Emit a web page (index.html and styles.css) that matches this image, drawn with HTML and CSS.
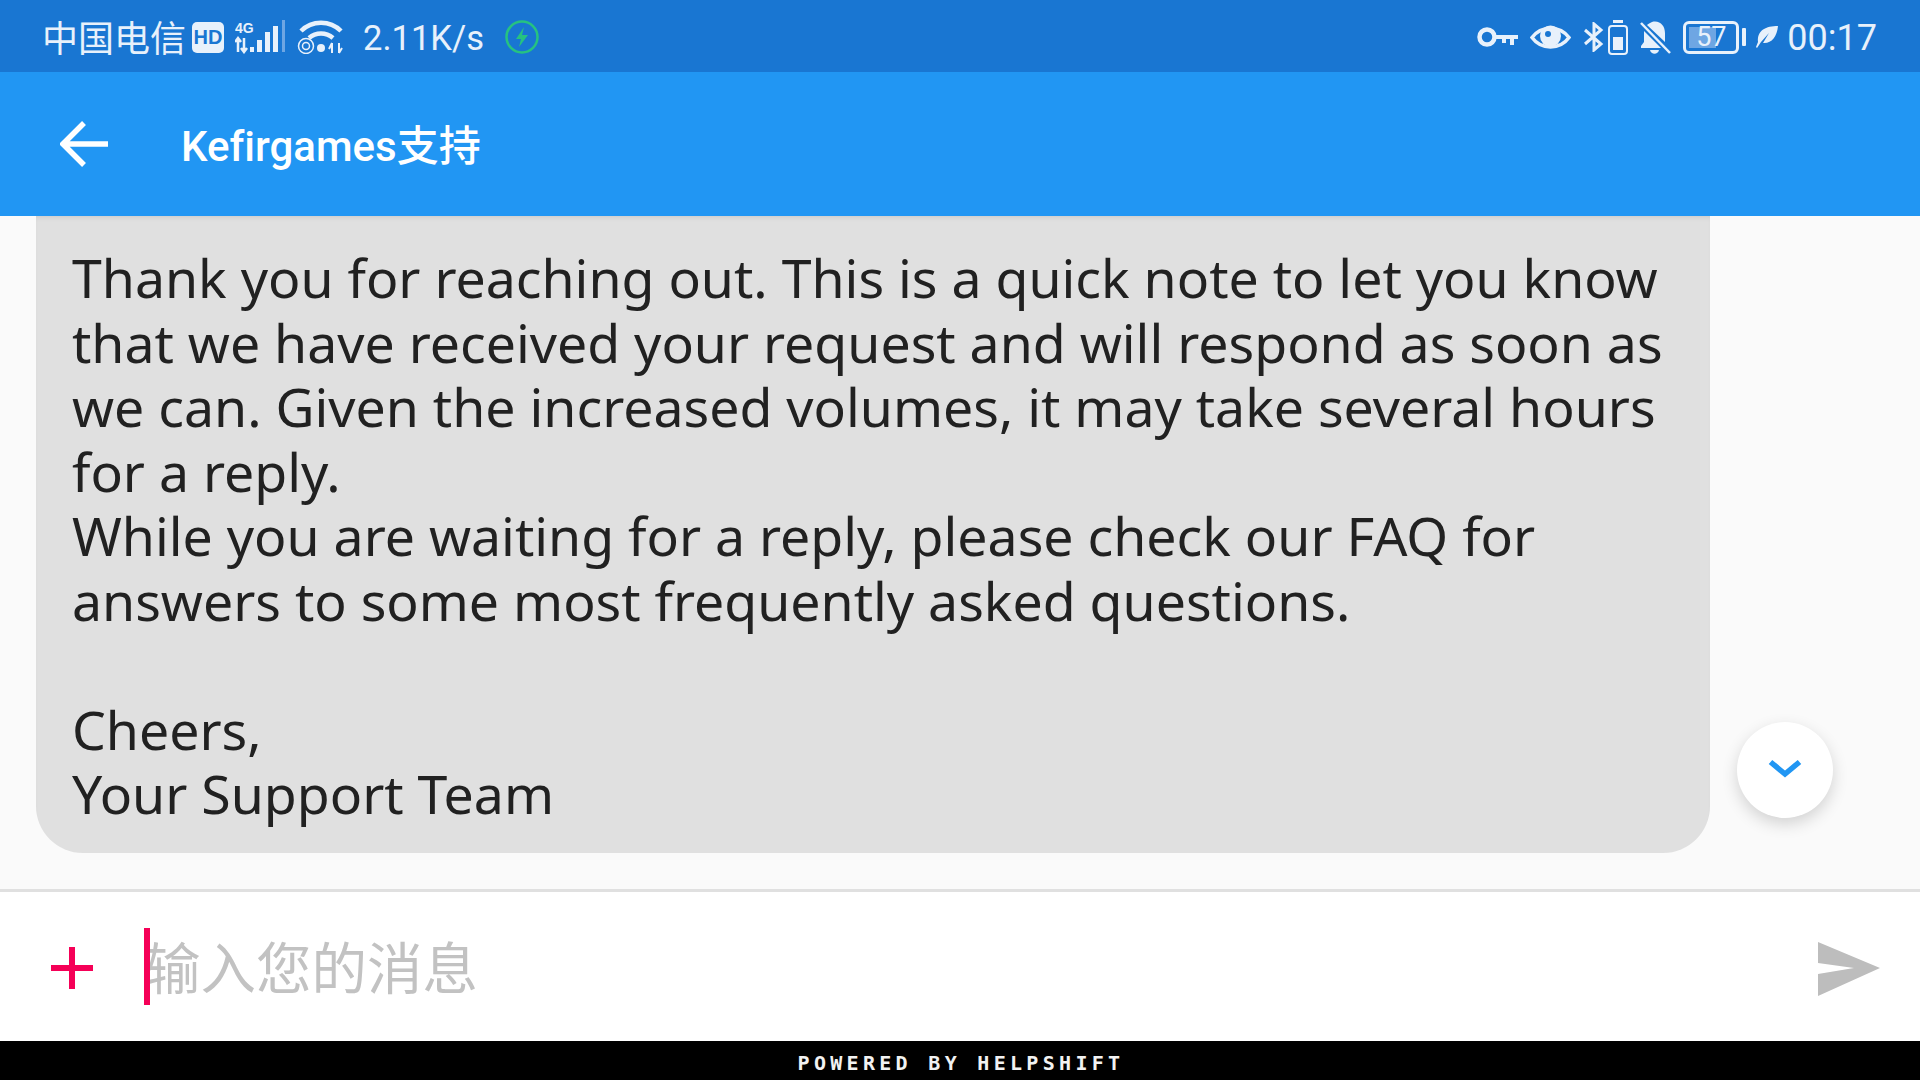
FILE: index.html
```html
<!DOCTYPE html>
<html lang="en">
<head>
    <meta charset="UTF-8">
    <title>Kefirgames支持</title>
    <link rel="stylesheet" href="styles.css">
</head>
<body>

    <div class="status-bar">
        <div class="status-left">
            <span class="carrier">中国电信</span>
            <svg class="ic-hd" width="32" height="31" viewBox="0 0 32 31">
                <rect width="32" height="31" rx="5" fill="#e8f1fb"/>
                <text x="16" y="22" text-anchor="middle" class="hd-text">HD</text>
            </svg>
            <svg class="ic-signal" width="54" height="34" viewBox="0 0 54 34">
                <text x="0" y="13" class="tiny-text">4G</text>
                <path d="M3 18v14M0 22l3-4 3 4M9 18v14M6 28l3 4 3-4" stroke="#e8f1fb" stroke-width="2.500" fill="none"/>
                <rect x="15" y="27" width="4" height="5" fill="#e8f1fb"/>
                <rect x="22" y="20" width="5" height="12" fill="#e8f1fb"/>
                <rect x="30" y="12" width="5" height="20" fill="#e8f1fb"/>
                <rect x="38" y="6" width="5" height="26" fill="#e8f1fb"/>
                <rect x="47" y="0" width="3" height="32" fill="#6ea6e3"/>
            </svg>
            <svg class="ic-wifi" width="48" height="34" viewBox="0 0 48 34">
                <path d="M4 11C15 0 33 0 44 11" stroke="#e8f1fb" stroke-width="4.500" fill="none"/>
                <path d="M12 18c7-6 17-6 24 0" stroke="#e8f1fb" stroke-width="4.500" fill="none"/>
                <circle cx="24" cy="28" r="4" fill="#e8f1fb"/>
                <circle cx="9" cy="26" r="7.5" stroke="#e8f1fb" stroke-width="1.500" fill="none"/>
                <circle cx="9" cy="26" r="3.5" stroke="#e8f1fb" stroke-width="1.500" fill="none"/>
                <path d="M35 23v10M32 29l3-6M42 23v10M42 33l3-5" stroke="#e8f1fb" stroke-width="2" fill="none"/>
            </svg>
            <span class="speed">2.11K/s</span>
            <svg class="ic-bolt" width="34" height="34" viewBox="0 0 34 34">
                <circle cx="17" cy="17" r="15.5" stroke="#26c281" stroke-width="2.500" fill="none"/>
                <path d="M19 7l-8 12h5l-2 8 9-12h-6z" fill="#26c281"/>
            </svg>
        </div>
        <div class="status-right">
            <svg class="ic-key" width="41" height="20" viewBox="0 0 41 20">
                <circle cx="10" cy="10" r="7.5" stroke="#e8f1fb" stroke-width="4.500" fill="none"/>
                <path d="M18 8h23v4h-4v6h-4v-6h-4v4h-4v-4h-7z" fill="#e8f1fb"/>
            </svg>
            <svg class="ic-eye" width="41" height="27" viewBox="0 0 41 27">
                <path d="M2 13.500C11 1 30 1 39 13.500 30 26 11 26 2 13.500z" stroke="#e8f1fb" stroke-width="3.500" fill="none"/>
                <circle cx="20.500" cy="12" r="10.500" fill="#e8f1fb"/>
                <circle cx="18" cy="10" r="3" fill="#1976d2"/>
            </svg>
            <svg class="ic-bt" width="22" height="30" viewBox="0 0 22 30">
                <path d="M2 8l16 14-7 6V2l7 6L2 22" stroke="#e8f1fb" stroke-width="3" fill="none"/>
            </svg>
            <svg class="ic-phone-batt" width="20" height="35" viewBox="0 0 20 35">
                <rect x="5" y="0" width="10" height="3" fill="#e8f1fb"/>
                <rect x="1" y="6" width="18" height="28" rx="3" stroke="#e8f1fb" stroke-width="2" fill="none"/>
                <rect x="5" y="17" width="10" height="13" fill="#e8f1fb"/>
            </svg>
            <svg class="ic-bell" width="33" height="35" viewBox="0 0 33 35">
                <path d="M13 2c8-2 13 4 13 11v9L8 5c1-1 3-2 5-3zM5 11l17 17H2v-2l3-4z" fill="#e8f1fb"/>
                <path d="M11 30h9c-1 5-8 5-9 0z" fill="#e8f1fb"/>
                <path d="M2 3l29 30" stroke="#e8f1fb" stroke-width="2.500"/>
            </svg>
            <div class="battery">
                <div class="battery-box">
                    <div class="battery-fill"></div>
                    <span class="battery-num">57</span>
                </div>
                <div class="battery-tip"></div>
            </div>
            <svg class="ic-leaf" width="22" height="22" viewBox="0 0 22 22">
                <path d="M22 0C10 0 1 4 2 16l-2 5 1 1 4-6 8-9-6 10c8 1 14-6 15-17z" fill="#e8f1fb"/>
            </svg>
            <span class="clock">00:17</span>
        </div>
    </div>

    <div class="app-bar">
        <svg class="back-icon" width="48" height="46" viewBox="0 0 48 46">
            <path d="M48 23H4M24 2L3 23l21 21" stroke="#fff" stroke-width="5.500" fill="none"/>
        </svg>
        <h1 class="app-title">Kefirgames支持</h1>
    </div>

    <div class="chat">
        <div class="bubble">
            <p>Thank you for reaching out. This is a quick note to let you know<br>
            that we have received your request and will respond as soon as<br>
            we can. Given the increased volumes, it may take several hours<br>
            for a reply.<br>
            While you are waiting for a reply, please check our FAQ for<br>
            answers to some most frequently asked questions.<br>
            <br>
            Cheers,<br>
            Your Support Team</p>
        </div>
        <div class="scroll-down">
            <svg width="34" height="19" viewBox="0 0 34 19">
                <path d="M2.500 3L17 15 31.500 3" stroke="#2196f3" stroke-width="5.500" fill="none"/>
            </svg>
        </div>
    </div>

    <div class="composer">
        <svg class="plus-icon" width="42" height="42" viewBox="0 0 42 42">
            <path d="M21 0v42M0 21h42" stroke="#f50057" stroke-width="6"/>
        </svg>
        <div class="caret"></div>
        <span class="placeholder">输入您的消息</span>
        <svg class="send-icon" width="62" height="54" viewBox="0 0 62 54">
            <path d="M0 0l62 26L0 54V32l36-6L0 21z" fill="#bdbdbd"/>
        </svg>
    </div>

    <div class="footer">POWERED BY HELPSHIFT</div>

</body>
</html>
```

FILE: styles.css
```css
/* General Styles */
body {
    margin: 0;
    width: 1920px;
    height: 1080px;
    overflow: hidden;
    display: flex;
    flex-direction: column;
    font-family: Roboto, "Noto Sans CJK SC", sans-serif;
    background-color: #fafafa;
}

/* Status bar */
.status-bar {
    height: 72px;
    flex: none;
    display: flex;
    justify-content: space-between;
    align-items: center;
    padding: 2px 43px 0 42px;
    box-sizing: border-box;
    background-color: #1976d2;
    color: #e8f1fb;
}

.status-left,
.status-right {
    display: flex;
    align-items: center;
}

.carrier {
    font-size: 36px;
    margin-top: -3px;
}

.speed {
    font-size: 34.5px;
    margin: 2px 0 0 18px;
}

.clock {
    font-size: 36px;
    margin: 2px 0 0 9px;
}

.hd-text {
    font: bold 20px "Liberation Sans", sans-serif;
    fill: #1976d2;
}

.tiny-text {
    font: bold 14px "Liberation Sans", sans-serif;
    fill: #e8f1fb;
}

.ic-hd { margin-left: 6px; }
.ic-signal { margin-left: 11px; }
.ic-wifi { margin-left: 8px; }
.ic-bolt { margin-left: 21px; }
.ic-eye { margin-left: 12px; }
.ic-bt { margin-left: 12px; }
.ic-phone-batt { margin-left: 3px; }
.ic-bell { margin-left: 11px; }
.ic-leaf { margin-left: 10px; }

.battery {
    display: flex;
    align-items: center;
    margin-left: 11px;
}

.battery-box {
    position: relative;
    width: 50px;
    height: 27px;
    border: 3px solid #e8f1fb;
    border-radius: 6px;
    display: flex;
    align-items: center;
    justify-content: center;
}

.battery-fill {
    position: absolute;
    left: 3px;
    top: 3px;
    bottom: 3px;
    width: 27px;
    background-color: #6ea6e3;
}

.battery-num {
    position: relative;
    font-size: 27px;
}

.battery-tip {
    width: 4px;
    height: 18px;
    margin-left: 3px;
    background-color: #e8f1fb;
    border-radius: 1px;
}

/* App bar */
.app-bar {
    height: 144px;
    flex: none;
    display: flex;
    align-items: center;
    padding-left: 60px;
    box-sizing: border-box;
    background-color: #2196f3;
}

.app-title {
    margin: -3px 0 0 73px;
    font-size: 42px;
    font-weight: 500;
    font-variant-ligatures: none;
    color: #fff;
}

/* Chat area */
.chat {
    position: relative;
    flex: 1;
    padding: 0 36px;
    border-bottom: 3px solid #e0e0e0;
}

.bubble {
    width: 1674px;
    height: 637px;
    padding: 30px 36px 0;
    box-sizing: border-box;
    background-color: #e0e0e0;
    border-radius: 0 0 47px 47px;
    box-shadow: inset 0 4px 4px -2px rgba(0, 0, 0, 0.08);
}

.bubble p {
    margin: 0;
    font-family: "Noto Sans", sans-serif;
    font-size: 53.6px;
    line-height: 64.5px;
    white-space: nowrap;
    color: #212121;
}

.scroll-down {
    position: absolute;
    left: 1737px;
    top: 506px;
    width: 96px;
    height: 96px;
    padding-bottom: 4px;
    box-sizing: border-box;
    display: flex;
    align-items: center;
    justify-content: center;
    border-radius: 50%;
    background-color: #fff;
    box-shadow: 0 6px 16px rgba(0, 0, 0, 0.16);
}

/* Message input */
.composer {
    height: 149px;
    flex: none;
    display: flex;
    align-items: center;
    padding: 0 40px 0 51px;
    box-sizing: border-box;
    background-color: #fff;
}

.plus-icon {
    margin-top: 2px;
}

.caret {
    position: relative;
    z-index: 1;
    width: 6px;
    height: 77px;
    margin-left: 51px;
    background-color: #f50057;
}

.placeholder {
    margin: -4px 0 0 -5px;
    font-size: 55.5px;
    color: #c2c2c2;
    font-family: "Noto Sans CJK SC", sans-serif;
}

.send-icon {
    margin-left: auto;
    margin-top: 5px;
}

/* Footer */
.footer {
    height: 39px;
    flex: none;
    display: flex;
    align-items: center;
    justify-content: center;
    padding: 4px 0 0 2px;
    box-sizing: border-box;
    background-color: #000;
    color: #f2f2f2;
    font-family: "DejaVu Sans Mono", monospace;
    font-weight: bold;
    font-size: 20px;
    letter-spacing: 4.3px;
}
```
